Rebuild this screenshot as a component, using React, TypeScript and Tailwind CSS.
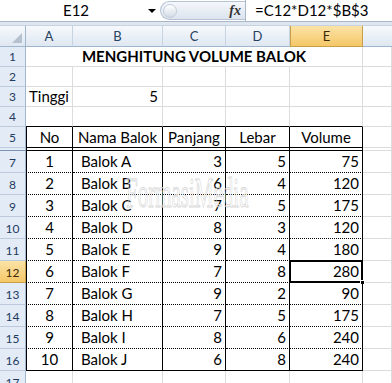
import React from "react";

type Item = [number, string, number, number, number];

const data: Item[] = [
  [1, "Balok A", 3, 5, 75],
  [2, "Balok B", 6, 4, 120],
  [3, "Balok C", 7, 5, 175],
  [4, "Balok D", 8, 3, 120],
  [5, "Balok E", 9, 4, 180],
  [6, "Balok F", 7, 8, 280],
  [7, "Balok G", 9, 2, 90],
  [8, "Balok H", 7, 5, 175],
  [9, "Balok I", 8, 6, 240],
  [10, "Balok J", 6, 8, 240],
];

const grid = "grid grid-cols-[26px_47px_90px_63px_64px_73px_29px] leading-[17px]";
const grey = "border-r border-b border-[#dadcdd]";

function RowHead({ n, active }: { n: string; active?: boolean }) {
  return (
    <div
      className={`flex items-end justify-center pb-[2px] border-r border-b text-[12px] leading-[14px] ${
        active
          ? "bg-linear-to-b from-[#fbe3a6] to-[#f5c766] border-r-[#c9a04a] border-b-[#c9a04a] text-[#3b2a05]"
          : "bg-[#e3ebf6] border-r-[#9eb6ce] border-b-[#bccadb] text-[#1e3a5f]"
      }`}
    >
      {n}
    </div>
  );
}

function Blank() {
  return <div className={grey} />;
}

export default function App() {
  return (
    <div className="relative w-[392px] h-[383px] overflow-hidden bg-white font-['Lato','Liberation_Sans',sans-serif] text-[15px] text-black">
      {/* formula bar */}
      <div className="flex h-[22px] border-b border-[#a9b7c9]">
        <div className="w-[160px] flex items-center bg-white">
          <span className="flex-1 text-center pl-[4px]">E12</span>
          <span className="mr-[4px] w-0 h-0 border-l-[4px] border-r-[4px] border-t-[4px] border-l-transparent border-r-transparent border-t-black" />
        </div>
        <div className="w-[85px] flex items-center">
          <div className="flex-1 h-[19px] rounded-l-full border border-r-0 border-[#b6c3d3] bg-linear-to-b from-[#f4f7fb] to-[#dde4ee] flex items-center">
            <div className="ml-[2px] w-[14px] h-[14px] rounded-full border border-[#c3ccd8] bg-linear-to-b from-[#ffffff] to-[#d5dce6]" />
            <span className="ml-auto mr-[4px] font-['Liberation_Serif',serif] italic font-bold text-[14px] text-[#333]">
              fx
            </span>
          </div>
        </div>
        <div className="flex-1 flex items-center pl-[9px] bg-white border-l border-[#a9b7c9]">
          =C12*D12*$B$3
        </div>
      </div>
      <div className="h-[4px] bg-[#dfe6ef] border-b border-[#c8d3e0]" />

      {/* column headers */}
      <div className={`${grid} h-[21px] text-[13px] text-[#27415f]`}>
        <div className="relative border-r border-b border-[#9eb6ce] bg-linear-to-b from-[#f6f9fc] to-[#dfe7f1]">
          <div className="absolute right-[3px] bottom-[3px] w-0 h-0 border-l-[10px] border-b-[10px] border-l-transparent border-b-[#b5c1cf]" />
        </div>
        {["A", "B", "C", "D"].map((c) => (
          <div
            key={c}
            className="flex items-center justify-center border-r border-b border-r-[#c6d3e2] border-b-[#9eb6ce] bg-linear-to-b from-[#f6f9fc] to-[#dfe7f1]"
          >
            {c}
          </div>
        ))}
        <div className="flex items-center justify-center border-r border-b border-l border-[#c9a04a] bg-linear-to-b from-[#fbe3a6] to-[#f5c766] text-[#3b2a05]">
          E
        </div>
        <div className="border-b border-[#9eb6ce] bg-linear-to-b from-[#f6f9fc] to-[#dfe7f1]" />
      </div>

      {/* row 1 */}
      <div className={`${grid} h-[20px]`}>
        <RowHead n="1" />
        <div className={`col-span-5 ${grey} flex items-end justify-center pb-[1px] font-bold`}>
          MENGHITUNG VOLUME BALOK
        </div>
        <Blank />
      </div>

      {/* row 2 */}
      <div className={`${grid} h-[20px]`}>
        <RowHead n="2" />
        {[0, 1, 2, 3, 4, 5].map((i) => (
          <Blank key={i} />
        ))}
      </div>

      {/* row 3 */}
      <div className={`${grid} h-[20px]`}>
        <RowHead n="3" />
        <div className={`${grey} flex items-end pl-[3px] pb-[1px]`}>Tinggi</div>
        <div className={`${grey} flex items-end justify-end pr-[4px] pb-[1px]`}>5</div>
        {[0, 1, 2, 3].map((i) => (
          <Blank key={i} />
        ))}
      </div>

      {/* row 4 */}
      <div className={`${grid} h-[20px]`}>
        <RowHead n="4" />
        {[0, 1, 2, 3, 4].map((i) => (
          <div key={i} className="border-r border-b border-r-[#dadcdd] border-b-black" />
        ))}
        <Blank />
      </div>

      {/* row 5 header */}
      <div className={`${grid} h-[21px]`}>
        <RowHead n="5" />
        {["No", "Nama Balok", "Panjang", "Lebar", "Volume"].map((t, i) => (
          <div
            key={t}
            className={`flex items-end justify-center pb-[1px] border-r border-b border-black ${i === 0 ? "border-l" : ""}`}
          >
            {t}
          </div>
        ))}
        <Blank />
      </div>

      {/* hidden row 6 */}
      <div className={`${grid} h-[3px]`}>
        <div className="border-r border-b border-r-[#9eb6ce] border-b-[#7d95b3] bg-[#e3ebf6]" />
        {[0, 1, 2, 3, 4].map((i) => (
          <div key={i} className={`border-r border-b border-black ${i === 0 ? "border-l" : ""}`} />
        ))}
        <Blank />
      </div>

      {/* data rows 7-16 */}
      {data.map(([no, nama, p, l, v], idx) => {
        const last = idx === data.length - 1;
        const bottom = last
          ? "border-b border-b-black"
          : "border-b border-b-black [border-bottom-style:dotted]";
        const rowNo = idx + 7;
        return (
          <div key={no} className={`${grid} h-[22px]`}>
            <RowHead n={String(rowNo)} active={rowNo === 12} />
            <div className={`flex items-end justify-center pb-[2px] border-l border-r border-l-black border-r-black ${bottom}`}>
              {no}
            </div>
            <div className={`flex items-end pl-[8px] pb-[2px] border-r border-r-black ${bottom}`}>{nama}</div>
            <div className={`flex items-end justify-end pr-[3px] pb-[2px] border-r border-r-black ${bottom}`}>{p}</div>
            <div className={`flex items-end justify-end pr-[3px] pb-[2px] border-r border-r-black ${bottom}`}>{l}</div>
            <div className={`relative flex items-end justify-end pr-[3px] pb-[2px] border-r border-r-black ${bottom}`}>
              {v}
              {rowNo === 12 && (
                <>
                  <div className="absolute -left-[1px] -top-[1px] -right-[1px] -bottom-[1px] border-2 border-black" />
                  <div className="absolute -right-[3px] -bottom-[3px] w-[5px] h-[5px] bg-black border border-white" />
                </>
              )}
            </div>
            <Blank />
          </div>
        );
      })}

      {/* row 17 */}
      <div className={`${grid} h-[22px]`}>
        <RowHead n="17" />
        {[0, 1, 2, 3, 4, 5].map((i) => (
          <Blank key={i} />
        ))}
      </div>

      {/* watermark */}
      <div className="absolute left-[126px] top-[172px] pointer-events-none origin-left scale-x-[0.5] text-[42px] leading-none text-transparent [-webkit-text-stroke:1px_#d9d9d9] font-['Liberation_Serif',serif]">
        FormasiMedia
      </div>
    </div>
  );
}
